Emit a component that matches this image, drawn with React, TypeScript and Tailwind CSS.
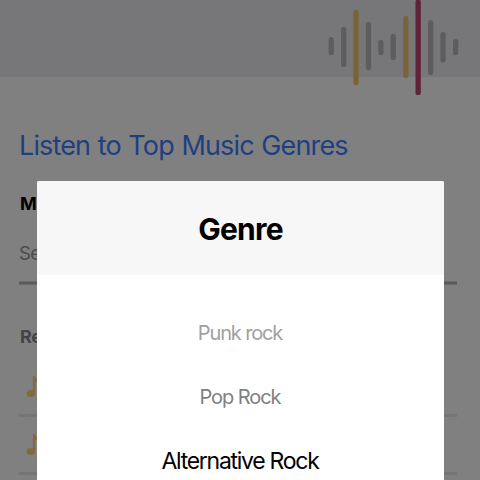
const bars = [
  { x: 328.6, top: 37, bottom: 55, fill: '#5d5d5d' },
  { x: 341, top: 27, bottom: 67, fill: '#5d5d5d' },
  { x: 353.4, top: 10, bottom: 85, fill: '#7c6336' },
  { x: 365.8, top: 22, bottom: 70, fill: '#5d5d5d' },
  { x: 378.2, top: 40, bottom: 55, fill: '#5d5d5d' },
  { x: 390.6, top: 34, bottom: 60, fill: '#5d5d5d' },
  { x: 403.2, top: 16, bottom: 78, fill: '#7c6336' },
  { x: 415.5, top: -0.5, bottom: 95, fill: '#5f2238' },
  { x: 428, top: 20, bottom: 75, fill: '#5d5d5d' },
  { x: 440.4, top: 32, bottom: 62.5, fill: '#5d5d5d' },
  { x: 453, top: 39, bottom: 55, fill: '#5d5d5d' },
];

function Waveform() {
  return (
    <svg className="block h-24 w-[480px]" viewBox="0 0 480 96">
      {bars.map((b) => (
        <rect key={b.x} x={b.x} y={b.top} width="5.3" height={b.bottom - b.top} rx="2.6" fill={b.fill} />
      ))}
    </svg>
  );
}

function NoteIcon() {
  return (
    <svg className="ml-[7px] block h-6 w-4" viewBox="0 0 16 24">
      <ellipse cx="4.8" cy="18.5" rx="4.3" ry="3.5" fill="#836a3e" />
      <path d="M6.9 19V1H9C9.3 4 13.5 5.5 13 11C12 8 10.5 7 9.1 6.5V19Z" fill="#836a3e" />
    </svg>
  );
}

function Row() {
  return (
    <div className="flex h-[58px] items-start border-b-[3px] border-[#757575] pt-[16px]">
      <NoteIcon />
    </div>
  );
}

export default function App() {
  return (
    <div className="relative h-[480px] w-[480px] overflow-hidden bg-[#808080] font-['Inter',sans-serif]">
      <header className="h-[77px] bg-[#777779]">
        <Waveform />
      </header>
      <main className="flex flex-col pl-[19px] pr-[23px] pt-[52px]">
        <h1 className="h-[34px] whitespace-nowrap text-[27px] leading-[34px] tracking-[-0.85px] text-[#1d4081] [word-spacing:0.8px]">
          Listen to Top Music Genres
        </h1>
        <div className="mt-[28px] h-[26px] pl-px text-[18px] font-bold leading-[26px] text-black">Music Genre</div>
        <div className="mt-[24px] h-[40px] text-[18.5px] leading-[24px] tracking-[-0.7px] text-[#4b4b4b]">Select</div>
        <div className="h-1 border-y border-[#6c6c6c] bg-[#5b5b5b]" />
        <div className="mt-[39px] h-[26px] pl-px text-[18px] font-bold leading-[26px] tracking-[-0.4px] text-[#434343]">
          Recent
        </div>
        <div className="mt-[9px]">
          <Row />
          <Row />
        </div>
      </main>
      <section className="absolute left-[37px] top-[181px] flex h-[299px] w-[407px] flex-col rounded-t-[2px] bg-white text-center">
        <h2 className="h-[94px] rounded-t-[2px] bg-[#f7f7f7] pt-[28px] text-[30px] font-bold leading-[40px] tracking-[-0.8px] text-black">
          Genre
        </h2>
        <div className="flex flex-col whitespace-nowrap pt-[42px]">
          <div className="mb-[32px] h-8 pr-px text-[20px] leading-8 tracking-[-1.15px] text-[#a0a0a0]">Punk rock</div>
          <div className="mb-[32px] h-8 pr-px text-[20px] leading-8 tracking-[-1.05px] text-[#808080]">Pop Rock</div>
          <div className="h-8 pr-px text-[23px] leading-8 tracking-[-1.28px] text-black">Alternative Rock</div>
        </div>
      </section>
    </div>
  );
}
